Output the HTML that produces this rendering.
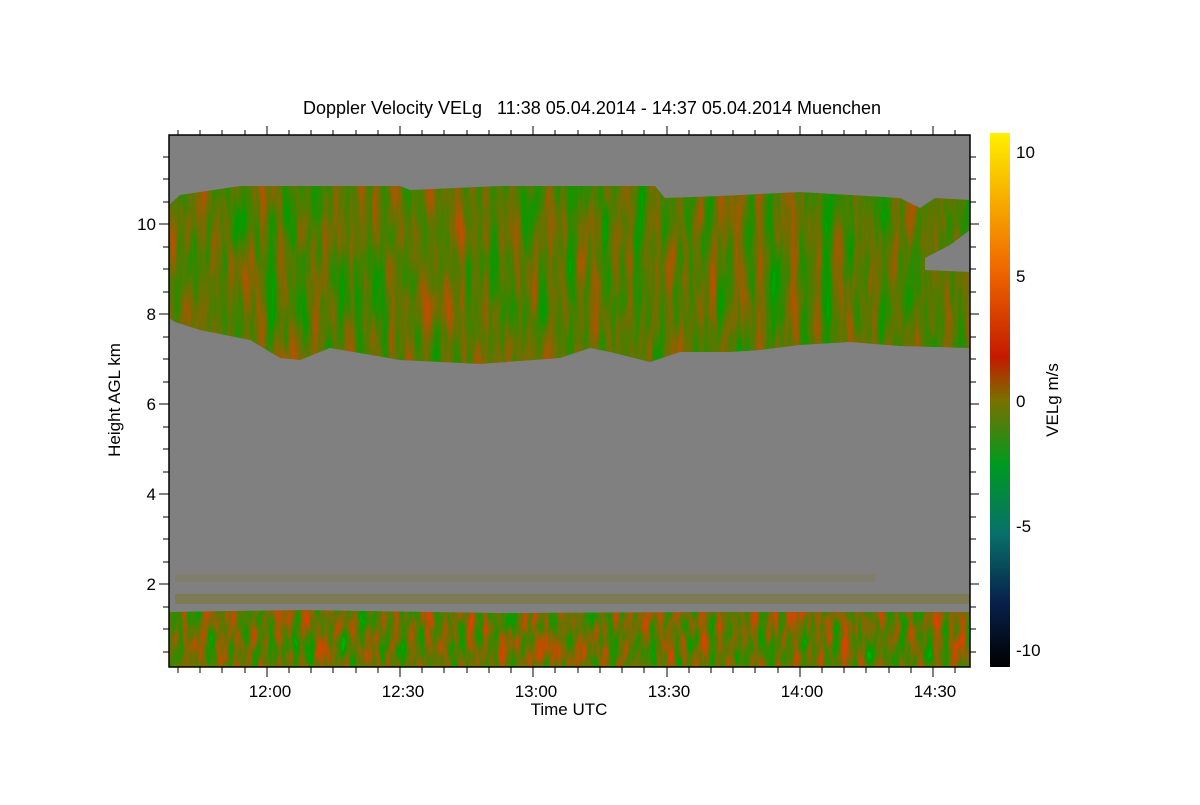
<!DOCTYPE html>
<html><head><meta charset="utf-8"><style>
html,body{margin:0;padding:0;background:#fff;}
svg text{font-family:"Liberation Sans",sans-serif;fill:#000;white-space:pre;}
</style></head><body>
<svg width="1200" height="800" viewBox="0 0 1200 800" xmlns="http://www.w3.org/2000/svg">
<defs>
<filter id="n" x="0" y="0" width="100%" height="100%" color-interpolation-filters="sRGB">
<feTurbulence type="fractalNoise" baseFrequency="0.09 0.012" numOctaves="3" seed="4"/>
<feColorMatrix type="matrix" values="1.2 0 0 0 -0.25  -0.5 0 0 0 0.72  0 0 0 0 0  0 0 0 0 1"/>
</filter>
<filter id="n2" x="0" y="0" width="100%" height="100%" color-interpolation-filters="sRGB">
<feTurbulence type="fractalNoise" baseFrequency="0.12 0.03" numOctaves="3" seed="9"/>
<feColorMatrix type="matrix" values="1.5 0 0 0 -0.35  -0.65 0 0 0 0.78  0 0 0 0 0  0 0 0 0 1"/>
</filter>
<clipPath id="c1"><path d="M169 205 L180 195 L240 186 L400 186 L410 190 L500 186 L655 186 L665 198 L720 196 L800 192 L900 198 L920 208 L935 198 L970 200 L970 230 L950 245 L925 258 L925 270 L970 272 L970 348 L900 346 L850 342 L800 345 L760 350 L730 352 L680 352 L650 362 L610 352 L590 348 L560 358 L480 364 L400 360 L330 348 L300 360 L280 358 L250 340 L200 330 L175 322 L169 318 Z"/></clipPath>
<clipPath id="c2"><path d="M169 612 L300 610 L500 613 L700 612 L970 612 L970 667 L169 667 Z"/></clipPath>
<linearGradient id="cb" x1="0" y1="1" x2="0" y2="0">
<stop offset="0" stop-color="#000000"/>
<stop offset="0.12" stop-color="#08204a"/>
<stop offset="0.25" stop-color="#08706a"/>
<stop offset="0.38" stop-color="#009a20"/>
<stop offset="0.5" stop-color="#7a7000"/>
<stop offset="0.58" stop-color="#c41a00"/>
<stop offset="0.75" stop-color="#f06a00"/>
<stop offset="1" stop-color="#fff000"/>
</linearGradient>
</defs>
<text x="592" y="114" font-size="18" text-anchor="middle">Doppler Velocity VELg   11:38 05.04.2014 - 14:37 05.04.2014 Muenchen</text>
<rect x="169" y="135" width="801" height="532" fill="#808080"/>
<g clip-path="url(#c1)"><rect x="169" y="180" width="801" height="190" filter="url(#n)"/></g>
<g clip-path="url(#c2)"><rect x="169" y="605" width="801" height="62" filter="url(#n2)"/></g>
<g fill="#7a7000">
<rect x="175" y="594" width="795" height="10" opacity="0.35"/>
<rect x="175" y="574" width="700" height="8" opacity="0.15"/>
</g>
<rect x="169" y="135" width="801" height="532" fill="none" stroke="#000" stroke-width="1.5"/>
<g stroke="#000" stroke-width="1">
<path d="M178 135v-5M200 135v-5M222 135v-5M245 135v-5M289 135v-5M311 135v-5M333 135v-5M356 135v-5M378 135v-5M422 135v-5M444 135v-5M467 135v-5M489 135v-5M511 135v-5M555 135v-5M578 135v-5M600 135v-5M622 135v-5M644 135v-5M689 135v-5M711 135v-5M733 135v-5M755 135v-5M778 135v-5M822 135v-5M844 135v-5M866 135v-5M889 135v-5M911 135v-5M955 135v-5"/>
<path d="M267 135v-9M400 135v-9M533 135v-9M667 135v-9M800 135v-9M933 135v-9"/>
<path d="M178 667v6M200 667v6M222 667v6M245 667v6M289 667v6M311 667v6M333 667v6M356 667v6M378 667v6M422 667v6M444 667v6M467 667v6M489 667v6M511 667v6M555 667v6M578 667v6M600 667v6M622 667v6M644 667v6M689 667v6M711 667v6M733 667v6M755 667v6M778 667v6M822 667v6M844 667v6M866 667v6M889 667v6M911 667v6M955 667v6"/>
<path d="M267 667v10M400 667v10M533 667v10M667 667v10M800 667v10M933 667v10"/>
<path d="M169 157h-6M169 179h-6M169 202h-6M169 247h-6M169 269h-6M169 292h-6M169 337h-6M169 359h-6M169 382h-6M169 427h-6M169 449h-6M169 472h-6M169 517h-6M169 539h-6M169 562h-6M169 607h-6M169 629h-6M169 652h-6"/>
<path d="M169 224h-10M169 314h-10M169 404h-10M169 494h-10M169 584h-10"/>
<path d="M970 157h6M970 179h6M970 202h6M970 247h6M970 269h6M970 292h6M970 337h6M970 359h6M970 382h6M970 427h6M970 449h6M970 472h6M970 517h6M970 539h6M970 562h6M970 607h6M970 629h6M970 652h6"/>
<path d="M970 224h9M970 314h9M970 404h9M970 494h9M970 584h9"/>
</g>
<g font-size="17" text-anchor="end">
<text x="156" y="230">10</text><text x="156" y="320">8</text><text x="156" y="410">6</text><text x="156" y="500">4</text><text x="156" y="590">2</text>
</g>
<g font-size="17" text-anchor="middle">
<text x="270" y="697">12:00</text><text x="403" y="697">12:30</text><text x="536" y="697">13:00</text><text x="669" y="697">13:30</text><text x="802" y="697">14:00</text><text x="935" y="697">14:30</text>
<text x="569" y="715">Time UTC</text>
</g>
<text transform="translate(120 400) rotate(-90)" font-size="17" text-anchor="middle">Height AGL km</text>
<rect x="990" y="133" width="20" height="534" fill="url(#cb)"/>
<g font-size="17">
<text x="1016" y="158">10</text><text x="1016" y="282">5</text><text x="1016" y="407">0</text><text x="1016" y="532">-5</text><text x="1016" y="656">-10</text>
</g>
<text transform="translate(1058 400) rotate(-90)" font-size="17" text-anchor="middle">VELg m/s</text>
</svg>
</body></html>
